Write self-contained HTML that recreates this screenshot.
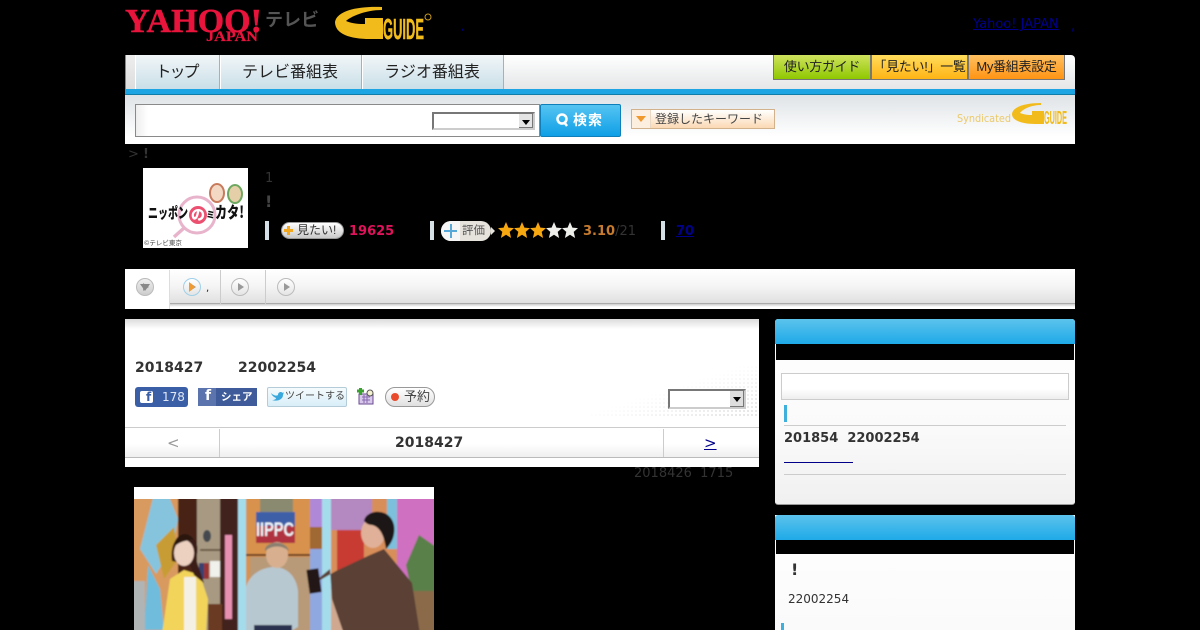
<!DOCTYPE html>
<html lang="ja"><head><meta charset="utf-8"><title>ニッポンのミカタ!</title>
<style>
html,body{margin:0;padding:0;background:#000;width:1200px;height:630px;overflow:hidden}
body{position:relative;font-family:"DejaVu Sans","Noto Sans CJK JP",sans-serif;font-size:13px;color:#333}
.a{position:absolute;white-space:nowrap}
.j{font-family:"Liberation Sans","Noto Sans CJK JP",sans-serif}
.tab{position:absolute;top:55px;height:34px;background:linear-gradient(#f2f6f8,#c9dfe8);border-right:1px solid #9db4be;border-left:1px solid #fff;box-sizing:border-box;text-align:center;font:16px/36px "Liberation Sans","Noto Sans CJK JP",sans-serif;color:#222;white-space:nowrap;text-indent:-2px}
.btn{position:absolute;top:55px;height:25px;box-sizing:border-box;border:1px solid #777;border-top:0;text-align:center;font:13px/24px "Liberation Sans","Noto Sans CJK JP",sans-serif;color:#222;white-space:nowrap;letter-spacing:-.3px}
.circ{position:absolute;top:278px;width:16px;height:16px;border-radius:50%;background:linear-gradient(#fff,#e4e4e4);border:1px solid #bbb}
.circ:after{content:"";position:absolute;left:6px;top:4px;border-left:6px solid #999;border-top:4px solid transparent;border-bottom:4px solid transparent}
.bar{position:absolute;width:4px;height:19px;top:221px;background:#d5dfe6}
.sel{position:absolute;box-sizing:border-box;background:#fff;border:2px solid #777;border-right-color:#ccc;border-bottom-color:#ccc}
.sel i{position:absolute;right:0;top:0;bottom:0;width:14px;background:#e4e4e4;border-right:1px solid #777;border-bottom:1px solid #777;box-sizing:border-box}
.sel i:after{content:"";position:absolute;left:3px;top:6px;border-top:5px solid #000;border-left:4px solid transparent;border-right:4px solid transparent}
.hd{position:absolute;left:775px;width:300px;height:25px;background:linear-gradient(#5cc3ec,#1eaae8);border-radius:3px 3px 0 0}
</style></head><body>

<!-- header logos -->
<svg class="a" style="left:125px;top:0" width="320" height="50">
<text x="0" y="32" font-family="Liberation Serif" font-weight="700" font-size="34" fill="#e8143c" stroke="#e8143c" stroke-width=".5" textLength="137" lengthAdjust="spacingAndGlyphs">YAHOO!</text>
<text x="81" y="41" font-family="Liberation Serif" font-weight="700" font-size="15" fill="#e8143c" stroke="#e8143c" stroke-width=".2" textLength="52" lengthAdjust="spacingAndGlyphs">JAPAN</text>
<text x="140" y="26" font-family="Noto Sans CJK JP" font-weight="700" font-size="18" fill="#555" textLength="54" lengthAdjust="spacingAndGlyphs">テレビ</text>
<path d="M210 22C212 10 235 6 257 7L257 10C240 10 225 17 221 21 228 24 235 24 240 24L240 18 258 18 258 39 245 39C225 39 210 34 210 22Z" fill="#f2bb1c"/>
<text x="258" y="39" font-family="Liberation Sans" font-weight="700" font-size="29" fill="#f2bb1c" stroke="#f2bb1c" stroke-width=".4" textLength="41" lengthAdjust="spacingAndGlyphs">GUIDE</text>
<circle cx="303" cy="17" r="3" fill="none" stroke="#c89a20"/>
</svg>
<a class="a" style="left:973px;top:17px;color:#00008b;text-decoration:underline">Yahoo! JAPAN</a>
<span class="a" style="left:1071px;top:19px;color:#00008b">,</span>
<span class="a" style="left:461px;top:22px;color:#00008b;font-size:10px">,</span>

<!-- nav -->
<div class="a" style="left:125px;top:55px;width:950px;height:34px;background:linear-gradient(#fff,#e4e6e7);border-radius:4px 4px 0 0"></div>
<div class="a" style="left:125px;top:55px;width:10px;height:34px;background:linear-gradient(#eee,#ddd);border-left:1px solid #888;box-sizing:border-box"></div>
<div class="tab" style="left:135px;width:85px;letter-spacing:-2px">トップ</div>
<div class="tab" style="left:220px;width:142px">テレビ番組表</div>
<div class="tab" style="left:362px;width:142px">ラジオ番組表</div>
<div class="btn" style="left:773px;width:98px;background:linear-gradient(#cfe25e,#8fc800)">使い方ガイド</div>
<div class="btn" style="left:871px;width:97px;background:linear-gradient(#ffdc5c,#ffb414)">「見たい!」一覧</div>
<div class="btn" style="left:968px;width:97px;background:linear-gradient(#ffc060,#ff9414)">My番組表設定</div>
<div class="a" style="left:125px;top:89px;width:950px;height:6px;background:#1ca5e2;border-bottom:1px solid #0f7da8;box-sizing:border-box"></div>

<!-- search band -->
<div class="a" style="left:125px;top:95px;width:950px;height:49px;background:linear-gradient(#dfe3e6,#fff 85%)"></div>
<div class="a" style="left:135px;top:104px;width:405px;height:33px;box-sizing:border-box;border:1px solid #8a8a8a;background:linear-gradient(90deg,#eee,#fff 12px)"></div>
<div class="sel" style="left:432px;top:112px;width:103px;height:18px"><i></i></div>
<div class="a j" style="left:540px;top:104px;width:81px;height:33px;box-sizing:border-box;border:1px solid #0e7fb8;border-radius:2px;background:linear-gradient(#55c4f2,#0f9fe6);color:#fff;font-weight:700;font-size:14px;line-height:31px;padding-left:32px;letter-spacing:1px">検索</div>
<svg class="a" style="left:555px;top:112px" width="16" height="16"><circle cx="7" cy="7" r="4.500" fill="none" stroke="#fff" stroke-width="2.500"/><path d="M9 10l3 4" stroke="#fff" stroke-width="2.500"/></svg>
<div class="a j" style="left:631px;top:109px;width:144px;height:20px;box-sizing:border-box;border:1px solid #d2b28c;background:linear-gradient(#fff,#fbd9b4);font-size:12px;line-height:19px;padding-left:23px;color:#444">登録したキーワード</div>
<div class="a" style="left:632px;top:110px;width:18px;height:18px;background:#fcefe0;border-right:1px solid #e8d8c4"></div>
<div class="a" style="left:636px;top:116px;border-top:6px solid #f0982c;border-left:5px solid transparent;border-right:5px solid transparent"></div>
<svg class="a" style="left:955px;top:100px" width="115" height="28">
<text x="2" y="22" font-family="DejaVu Sans" font-size="10.500" fill="#ecc96a" textLength="54" lengthAdjust="spacingAndGlyphs">Syndicated</text>
<path d="M57 14C58 6 72 3 86 3L86 5C76 5 68 9 65 13 70 15 74 15 77 15L77 11 89 11 89 24 80 24C68 24 57 21 57 14Z" fill="#f2bb1c"/>
<text x="89" y="24" font-family="Liberation Sans" font-size="18" font-weight="700" fill="#f2bb1c" textLength="23" lengthAdjust="spacingAndGlyphs">GUIDE</text>
</svg>

<!-- breadcrumb and program info -->
<span class="a" style="left:128px;top:147px;color:#333">&gt; <b>!</b></span>
<div class="a" style="left:143px;top:168px;width:105px;height:80px;background:#fff"></div>
<svg class="a" style="left:143px;top:168px" width="105" height="80">
<path d="M31 69L41 60" stroke="#e8b4cc" stroke-width="3.500"/>
<circle cx="54" cy="47" r="18" fill="none" stroke="#e8b4cc" stroke-width="3"/>
<circle cx="55" cy="47" r="9" fill="#ec5070"/>
<ellipse cx="74" cy="25" rx="7" ry="9" fill="#f3d8c4" stroke="#c87a5c" stroke-width="2"/>
<ellipse cx="92" cy="26" rx="7" ry="9" fill="#e4cfa8" stroke="#6ea860" stroke-width="2"/>
<text x="5" y="50" font-family="Noto Sans CJK JP" font-weight="900" font-size="15" fill="#111" textLength="40" lengthAdjust="spacingAndGlyphs">ニッポン</text>
<text x="48" y="52" font-family="Noto Sans CJK JP" font-weight="900" font-size="14" fill="#fff">の</text>
<text x="63" y="50" font-family="Noto Sans CJK JP" font-weight="900" font-size="9" fill="#111">ミ</text>
<text x="72" y="50" font-family="Noto Sans CJK JP" font-weight="900" font-size="16" fill="#111" textLength="29" lengthAdjust="spacingAndGlyphs">カタ!</text>
<text x="1" y="77" font-family="Noto Sans CJK JP" font-size="6.500" fill="#444">©テレビ東京</text>
</svg>
<span class="a" style="left:265px;top:171px;color:#333">1</span>
<b class="a" style="left:265px;top:192px;color:#444;font-size:16px">!</b>
<div class="bar" style="left:265px"></div>
<div class="a j" style="left:281px;top:222px;width:63px;height:17px;box-sizing:border-box;border:1px solid #999;border-radius:9px;background:linear-gradient(#fff,#c9c9c9);font-size:12px;line-height:15px;padding-left:15px;color:#333">見たい!</div>
<div class="a" style="left:284px;top:229px;width:9px;height:3px;background:#f2a820"></div>
<div class="a" style="left:287px;top:226px;width:3px;height:9px;background:#f2a820"></div>
<b class="a" style="left:349px;top:224px;color:#e0125c;font-size:13px">19625</b>
<div class="bar" style="left:430px"></div>
<div class="a j" style="left:441px;top:221px;width:50px;height:20px;box-sizing:border-box;border-radius:10px;background:#e6e2dc;font-size:11.500px;line-height:20px;padding-left:21px;color:#555">評価</div>
<div class="a" style="left:441px;top:221px;width:19px;height:20px;border-radius:10px 0 0 10px;background:#f6f6f6"></div>
<div class="a" style="left:444px;top:230px;width:13px;height:2px;background:#58a8d8"></div>
<div class="a" style="left:450px;top:224px;width:2px;height:14px;background:#58a8d8"></div>
<div class="a" style="left:491px;top:227px;border-left:4px solid #e6e2dc;border-top:4px solid transparent;border-bottom:4px solid transparent"></div>
<svg class="a" style="left:498px;top:222px" width="82" height="17">
<defs><path id="s" d="M8 0l2.400 5.600 5.600.5-4.300 3.800 1.400 6.100L8 12.800 2.900 16l1.400-6.100L0 6.100l5.600-.5z"/></defs>
<use href="#s" fill="#f7a70f"/><use href="#s" x="16" fill="#f7a70f"/><use href="#s" x="32" fill="#f7a70f"/><use href="#s" x="48" fill="#eeeeea"/><use href="#s" x="64" fill="#eeeeea"/>
</svg>
<span class="a" style="left:583px;top:224px;font-size:13px;color:#333"><b style="color:#c67b30">3.10</b>/21</span>
<div class="bar" style="left:661px"></div>
<b class="a" style="left:676px;top:224px;color:#00008b;text-decoration:underline">70</b>

<!-- tabs -->
<div class="a" style="left:125px;top:269px;width:950px;height:34px;background:linear-gradient(#fff,#f5f5f5 50%,#e0e0e0);border-bottom:1px solid #aaa"></div>
<div class="a" style="left:125px;top:304px;width:950px;height:5px;background:linear-gradient(#ccc,#fff 3px)"></div>
<div class="a" style="left:125px;top:270px;width:45px;height:39px;background:#fff;border-right:1px solid #ddd;box-sizing:border-box"></div>
<div class="a" style="left:220px;top:270px;width:1px;height:34px;background:#ccc"></div>
<div class="a" style="left:265px;top:270px;width:1px;height:34px;background:#ccc"></div>
<div class="circ" style="left:136px;background:linear-gradient(#eee,#ccc)"></div>
<div class="a" style="left:140px;top:284px;border-top:7px solid #888;border-left:5px solid transparent;border-right:5px solid transparent"></div>
<div class="circ" style="left:183px;border-color:#9fd0e8"></div>
<div class="a" style="left:189px;top:282px;border-left:6px solid #f09a30;border-top:5px solid transparent;border-bottom:5px solid transparent"></div>
<span class="a" style="left:206px;top:283px;font-size:10px;color:#222">,</span>
<div class="circ" style="left:231px"></div>
<div class="circ" style="left:277px"></div>

<!-- main panel -->
<div class="a" style="left:125px;top:319px;width:634px;height:148px;background:linear-gradient(#dcdcdc,#fff 10px)"></div>
<div class="a" style="left:590px;top:365px;width:169px;height:53px;background-image:radial-gradient(#e6e6e6 1px,transparent 1.200px);background-size:4px 4px;-webkit-mask-image:linear-gradient(to bottom right,transparent 45%,#000 90%);mask-image:linear-gradient(to bottom right,transparent 45%,#000 90%)"></div>
<b class="a" style="left:135px;top:360px;font-size:14px;color:#333">2018427</b>
<b class="a" style="left:238px;top:360px;font-size:14px;color:#333">22002254</b>
<div class="a" style="left:135px;top:387px;width:53px;height:20px;background:#3b5fa6;border-radius:3px;color:#dfe6f4;font-size:12px;line-height:20px;text-indent:27px">178</div>
<div class="a" style="left:140px;top:391px;width:13px;height:12px;background:#fff;border-radius:2px"></div>
<b class="a" style="left:146px;top:390px;color:#3b5fa6;font-size:12px">f</b>
<div class="a j" style="left:198px;top:388px;width:59px;height:18px;background:#3f5b9a;color:#fff;font-size:10.500px;font-weight:700;line-height:18px;text-indent:23px">シェア</div>
<div class="a" style="left:198px;top:388px;width:18px;height:18px;background:#5c74ae"></div>
<b class="a" style="left:205px;top:388px;color:#fff;font-size:14px">f</b>
<div class="a j" style="left:267px;top:387px;width:80px;height:20px;box-sizing:border-box;border:1px solid #b4ccd8;border-radius:2px;background:linear-gradient(#f6fbfd,#d8eef8);font-size:10px;line-height:18px;text-indent:17px;color:#444">ツイートする</div>
<svg class="a" style="left:271px;top:391px" width="13" height="11"><path d="M0 2C3 5 6 5 7 4 7 1 10 0 12 2L13 1 12 4C12 8 7 11 1 9 4 9 5 8 5 7 3 6 1 5 0 2Z" fill="#3aa8dc"/></svg>
<svg class="a" style="left:357px;top:387px" width="18" height="18">
<rect x="2" y="7" width="14" height="10" fill="#d8c8ec" stroke="#6a4a90"/>
<path d="M5 10h8M5 13h8M7 8v8M10 8v8" stroke="#8a6ab0"/>
<path d="M0 4h7M3.500 1v7" stroke="#3aa030" stroke-width="3"/>
<circle cx="13" cy="6" r="3" fill="#f4f0d0" stroke="#555"/>
</svg>
<div class="a j" style="left:385px;top:387px;width:50px;height:20px;box-sizing:border-box;border:1px solid #999;border-radius:10px;background:linear-gradient(#fff,#e0e0e0);font-size:13px;line-height:18px;text-indent:18px;color:#444">予約</div>
<div class="a" style="left:391px;top:393px;width:8px;height:8px;border-radius:50%;background:#ea4a2c"></div>
<div class="sel" style="left:668px;top:389px;width:78px;height:20px"><i style="background:#ddd"></i></div>

<div class="a" style="left:125px;top:427px;width:634px;height:31px;box-sizing:border-box;background:linear-gradient(#fff,#fff 55%,#efefef);border-top:1px solid #ccc;border-bottom:1px solid #bbb"></div>
<div class="a" style="left:219px;top:429px;width:1px;height:28px;background:#ccc"></div>
<div class="a" style="left:663px;top:429px;width:1px;height:28px;background:#ccc"></div>
<span class="a" style="left:167px;top:434px;font-size:15px;color:#999">&lt;</span>
<b class="a" style="left:395px;top:435px;font-size:14px;color:#333">2018427</b>
<a class="a" style="left:704px;top:434px;font-size:15px;color:#00008b;text-decoration:underline">&gt;</a>
<span class="a" style="left:634px;top:466px;color:#333">2018426&nbsp; 1715</span>

<!-- photo -->
<div class="a" style="left:134px;top:487px;width:300px;height:143px;background:#fff"></div>
<svg class="a" style="left:134px;top:499px" width="300" height="131" viewBox="0 0 300 131">
<defs><filter id="b" x="-2%" y="-2%" width="104%" height="104%"><feGaussianBlur stdDeviation=".7"/></filter></defs>
<g filter="url(#b)">
<rect x="-5" y="-5" width="310" height="140" fill="#d99a5e"/>
<path d="M20 -5L6 50 22 75 38 50 44 20 34 -5Z" fill="#86c4de"/>
<path d="M22 46L30 80 44 60 40 28Z" fill="#c89c36"/>
<path d="M14 66L10 131H30L26 90Z" fill="#70bcdc"/>
<rect x="-5" y="82" width="16" height="55" fill="#b0b4b4"/>
<rect x="44" y="-5" width="19" height="80" fill="#4a2418"/>
<rect x="63" y="-5" width="23" height="140" fill="#a89a82"/>
<rect x="86" y="-5" width="18" height="140" fill="#43221a"/>
<rect x="66" y="50" width="20" height="2" fill="#6a5a4a"/>
<rect x="65" y="64" width="5" height="16" fill="#3a3f70"/><rect x="70" y="64" width="5" height="16" fill="#9a3030"/>
<rect x="76" y="62" width="10" height="16" fill="#f0f0ec"/>
<ellipse cx="73" cy="37" rx="4" ry="6" fill="#444a50"/>
<rect x="91" y="36" width="7" height="84" fill="#e890b0"/>
<rect x="74" y="105" width="14" height="30" fill="#6a3a24"/>
<rect x="104" y="-5" width="8" height="140" fill="#a5dceb"/>
<rect x="112" y="-5" width="64" height="140" fill="#d8924e"/>
<rect x="126" y="-5" width="33" height="18" fill="#8a8a70"/>
<rect x="122" y="13" width="39" height="31" fill="#3c5ea8"/>
<rect x="122" y="27" width="39" height="17" fill="#b03040"/>
<text x="122" y="37" font-family="Liberation Sans" font-weight="700" font-size="19" fill="#eef4f8" textLength="38" lengthAdjust="spacingAndGlyphs">IIPPC</text>
<rect x="112" y="55" width="64" height="2" fill="#6a3a20"/>
<rect x="116" y="58" width="60" height="77" fill="#b89a78"/>
<rect x="176" y="-5" width="12" height="33" fill="#b088d8"/><rect x="176" y="28" width="12" height="22" fill="#a06830"/><rect x="176" y="50" width="12" height="85" fill="#90a8e0"/>
<rect x="188" y="-5" width="9" height="140" fill="#a5dceb"/>
<rect x="197" y="-5" width="108" height="140" fill="#d88e58"/>
<rect x="197" y="-5" width="41" height="36" fill="#b488c0"/>
<rect x="203" y="31" width="27" height="50" fill="#c83a30"/>
<rect x="197" y="78" width="30" height="57" fill="#d0a890"/>
<rect x="253" y="-5" width="10" height="55" fill="#7cc0dc"/>
<rect x="263" y="-5" width="42" height="100" fill="#d070c0"/>
<path d="M272 66L285 36 305 50V105H280Z" fill="#5a8048"/>
<rect x="270" y="92" width="35" height="43" fill="#8a6a4a"/>
<!-- woman -->
<path d="M28 135L36 80 50 71 66 76 74 100 72 135Z" fill="#f2d45a"/>
<rect x="50" y="78" width="12" height="57" fill="#f4f0e4"/>
<path d="M38 62C36 46 42 36 52 36 62 38 66 46 62 60L70 84 60 76 56 66Z" fill="#3a1e18"/>
<ellipse cx="50" cy="54" rx="10" ry="13" fill="#ecd0c0"/>
<path d="M40 48C40 36 52 30 60 40 52 42 46 42 40 48Z" fill="#2c1810"/>
<!-- man -->
<path d="M112 135V88C116 74 130 68 140 68 152 68 162 76 164 92V128L152 135Z" fill="#b8c8d0"/>
<ellipse cx="143" cy="56" rx="11" ry="13" fill="#d8b090"/>
<path d="M131 52C130 42 152 40 155 52 148 46 138 46 131 52Z" fill="#8a8070"/>
<rect x="120" y="126" width="38" height="9" fill="#2a3050"/>
<!-- guy -->
<path d="M174 88L196 70 198 100 210 135H286L278 84 250 50 236 56 202 72Z" fill="#5a4034"/>
<rect x="174" y="70" width="12" height="24" fill="#241414" transform="rotate(-8 180 82)"/>
<ellipse cx="239" cy="34" rx="12" ry="15" fill="#e0b098"/>
<path d="M230 22C232 10 256 8 260 26 262 38 256 46 252 50 250 36 246 28 238 26 234 26 232 24 230 22Z" fill="#1f1612"/>
</g>
</svg>

<!-- sidebar 1 -->
<div class="a" style="left:775px;top:319px;width:300px;height:186px;background:linear-gradient(#fff,#fafafa 60%,#f0f0f0);border-radius:3px;border-bottom:1px solid #999;box-sizing:border-box"></div>
<div class="hd" style="top:319px"></div>
<div class="a" style="left:776px;top:344px;width:298px;height:16px;background:#000"></div>
<div class="a" style="left:781px;top:373px;width:288px;height:27px;box-sizing:border-box;border:1px solid #ccc;background:linear-gradient(#fff,#fff 60%,#eee)"></div>
<div class="a" style="left:784px;top:405px;width:3px;height:17px;background:#3fb0dc"></div>
<div class="a" style="left:784px;top:425px;width:282px;height:1px;background:#ccc"></div>
<b class="a" style="left:784px;top:431px;color:#333;font-size:13px">201854&nbsp; 22002254</b>
<div class="a" style="left:784px;top:462px;width:69px;height:1px;background:#00008b"></div>
<div class="a" style="left:784px;top:474px;width:282px;height:1px;background:#ccc"></div>

<!-- sidebar 2 -->
<div class="a" style="left:775px;top:515px;width:300px;height:115px;background:linear-gradient(#fff,#fafafa)"></div>
<div class="hd" style="top:515px"></div>
<div class="a" style="left:776px;top:540px;width:298px;height:14px;background:#000"></div>
<b class="a" style="left:791px;top:560px;font-size:16px;color:#333">!</b>
<span class="a" style="left:788px;top:592px;font-size:12px;color:#333">22002254</span>
<div class="a" style="left:781px;top:623px;width:3px;height:7px;background:#3fb0dc"></div>
</body></html>
